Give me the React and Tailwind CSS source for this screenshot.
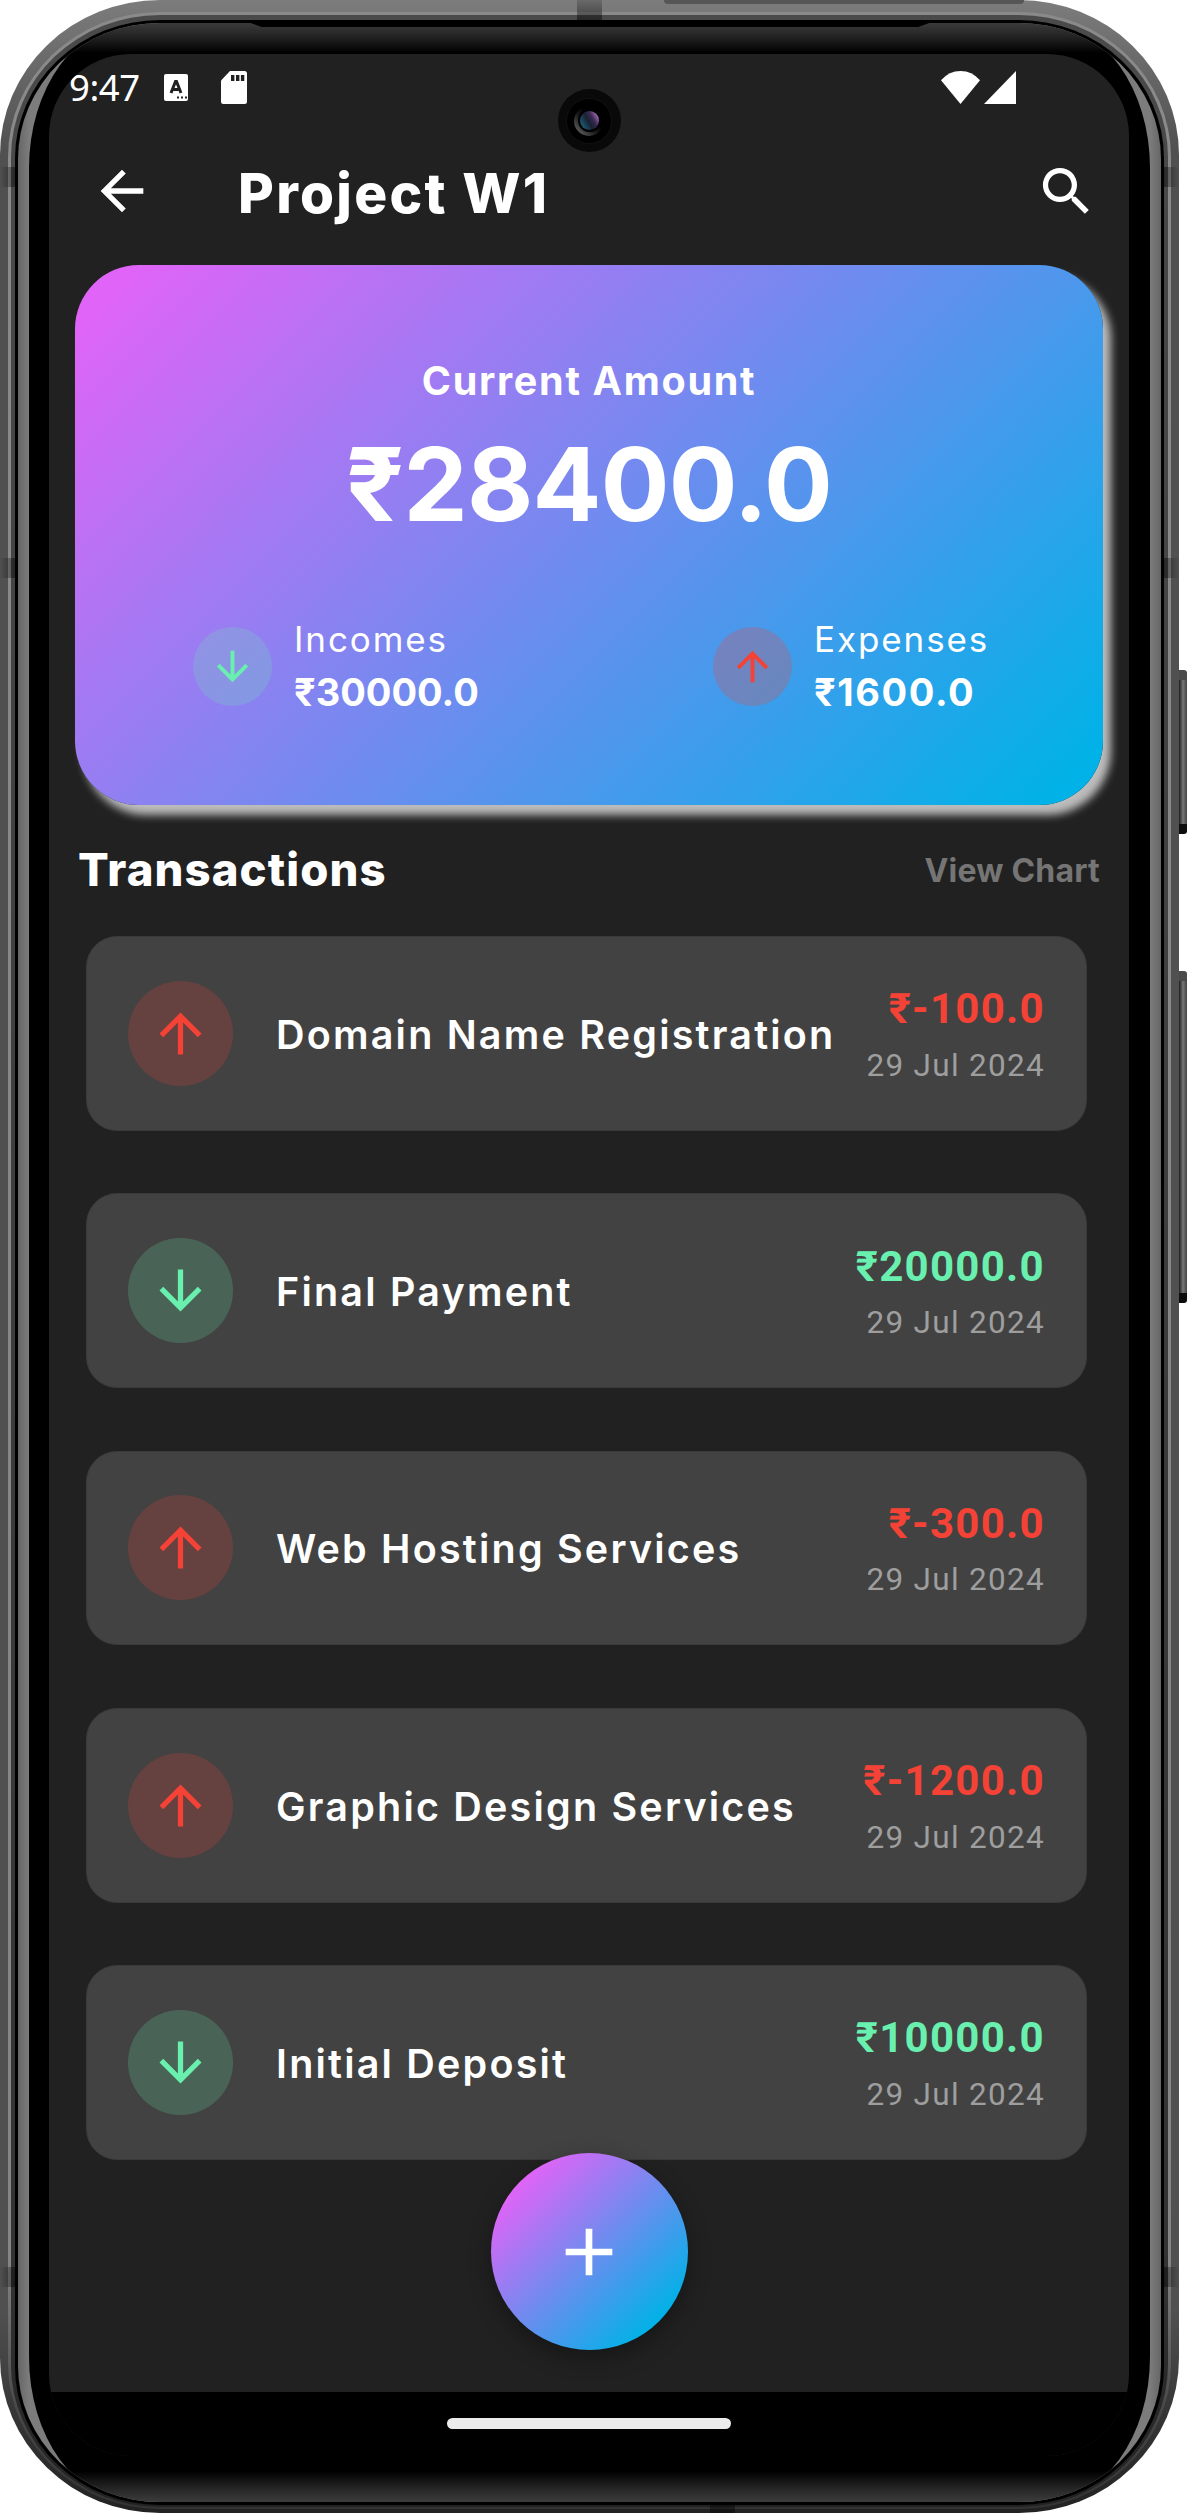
import { MdAdd, MdArrowBack, MdArrowDownward, MdArrowUpward, MdSearch } from "react-icons/md";

const transactions = [
  { title: "Domain Name Registration", amount: "₹-100.0", date: "29 Jul 2024", kind: "expense" },
  { title: "Final Payment", amount: "₹20000.0", date: "29 Jul 2024", kind: "income" },
  { title: "Web Hosting Services", amount: "₹-300.0", date: "29 Jul 2024", kind: "expense" },
  { title: "Graphic Design Services", amount: "₹-1200.0", date: "29 Jul 2024", kind: "expense" },
  { title: "Initial Deposit", amount: "₹10000.0", date: "29 Jul 2024", kind: "income" },
];

function StatusBar() {
  return (
    <div className="flex h-[66px] shrink-0 items-center pl-[20px] pr-[113px] text-white">
      <span className="w-[79px] font-['Noto_Sans',sans-serif] text-[36.5px] leading-none tracking-[-0.4px]">9:47</span>
      <svg className="ml-[16px] h-[27px] w-[24px]" viewBox="0 0 24 27">
        <rect width="24" height="27" rx="2" fill="#fff" />
        <path d="M7 19 L11.5 7.5 H12.5 L17 19 M8.5 15.5 H15.5" fill="none" stroke="#212121" strokeWidth="3" />
        <path d="M13 22.5h2v2h-2zM17 22.5h2v2h-2zM21 22.5h2v2h-2z" fill="#212121" />
      </svg>
      <svg className="ml-[33px] h-[33px] w-[26px]" viewBox="0 0 26 33">
        <path d="M9 0H23.5Q26 0 26 2.5V30.5Q26 33 23.5 33H2.5Q0 33 0 30.5V9.5Z" fill="#fff" />
        <path d="M10 4h3.4v6H10zM15 4h3.4v6H15zM19.9 4h3.4v6h-3.4z" fill="#212121" />
      </svg>
      <svg className="ml-auto h-[33px] w-[39px]" viewBox="0 0 39 33">
        <path d="M19.5 33 0 9.3Q8 0 19.5 0T39 9.3Z" fill="#fff" />
      </svg>
      <svg className="ml-[4px] h-[33px] w-[32px]" viewBox="0 0 32 33">
        <path d="M32 0V33H0Z" fill="#fff" />
      </svg>
    </div>
  );
}

function AppBar() {
  return (
    <div className="flex h-[145px] shrink-0 items-center pl-[41px] pr-[31px] text-white">
      <MdArrowBack className="-mt-[3px] size-[64px]" />
      <h1 className="ml-[84px] whitespace-nowrap text-[55px] font-extrabold leading-[66px] tracking-[2.3px]">Project W1</h1>
      <MdSearch className="-mt-[3px] ml-auto size-[63px]" />
    </div>
  );
}

function Total({ label, value, income }) {
  const Arrow = income ? MdArrowDownward : MdArrowUpward;
  return (
    <div className={income ? "flex items-center gap-[22px]" : "flex w-[272px] items-center gap-[22px]"}>
      <span
        className={
          income
            ? "-mt-[6px] flex size-[79px] shrink-0 items-center justify-center rounded-full bg-[#69f0ae]/20 text-[#69f0ae]"
            : "-mt-[6px] flex size-[79px] shrink-0 items-center justify-center rounded-full bg-[#f44336]/25 text-[#f44336]"
        }
      >
        <Arrow className="size-[47px]" />
      </span>
      <div className="whitespace-nowrap">
        <div className="text-[35px] leading-[46px] tracking-[1.9px]">{label}</div>
        <div className={income ? "text-[38px] font-bold leading-[60px]" : "text-[38px] font-bold leading-[60px] tracking-[1.6px]"}>
          {value}
        </div>
      </div>
    </div>
  );
}

function BalanceCard() {
  return (
    <section className="ml-[26px] mr-[26px] flex h-[540px] shrink-0 flex-col rounded-[64px] bg-[linear-gradient(135deg,#e064f7_3.6%,#00b2e7_96.4%)] pt-[91px] text-white shadow-[8px_10px_8px_#bdbdbd]">
      <div className="text-center text-[39.5px] font-bold leading-[50px] tracking-[1.7px]">Current Amount</div>
      <div className="mt-[18px] text-center text-[102px] font-bold leading-[120px] tracking-[-0.8px]">₹28400.0</div>
      <div className="mt-[72px] flex items-center justify-between px-[118px]">
        <Total label="Incomes" value="₹30000.0" income />
        <Total label="Expenses" value="₹1600.0" />
      </div>
    </section>
  );
}

function TransactionRow({ item }) {
  const income = item.kind === "income";
  const Arrow = income ? MdArrowDownward : MdArrowUpward;
  return (
    <li className="flex h-[194.7px] items-center rounded-[31px] border border-[#3a3a3a] bg-[#424242] pl-[41px] pr-[41px]">
      <span
        className={
          income
            ? "flex size-[105px] shrink-0 items-center justify-center rounded-full bg-[#69f0ae]/20 text-[#69f0ae]"
            : "flex size-[105px] shrink-0 items-center justify-center rounded-full bg-[#f44336]/20 text-[#f44336]"
        }
      >
        <Arrow className="size-[63px]" />
      </span>
      <span className="ml-[43px] mt-[3px] whitespace-nowrap text-[39.5px] font-semibold leading-[48px] tracking-[2.2px] text-white">
        {item.title}
      </span>
      <span className="ml-auto flex flex-col items-end whitespace-nowrap pt-[9px] font-['Roboto',sans-serif] leading-[56.5px]">
        <span
          className={
            income
              ? "text-[42px] font-bold tracking-[1.3px] text-[#69f0ae]"
              : "text-[42px] font-bold tracking-[1.3px] text-[#f44336]"
          }
        >
          {item.amount}
        </span>
        <span className="text-[31.5px] tracking-[1.3px] text-[#9e9e9e]">{item.date}</span>
      </span>
    </li>
  );
}

function Camera() {
  return (
    <div className="absolute left-[508.5px] top-[35px] flex size-[63px] items-center justify-center rounded-full bg-[#090909]">
      <div className="flex size-[46px] items-center justify-center rounded-full border border-[#111] bg-black">
        <div className="flex size-[30px] items-center justify-center rounded-full bg-[linear-gradient(45deg,#777,#1c1c1c_40%,#000_60%)]">
          <div className="flex size-[23px] items-center justify-center rounded-full bg-black">
            <div className="size-[19px] rounded-full bg-[linear-gradient(60deg,#1d6480_8%,#182233_45%,#3a2a50_65%,#c583d6_95%)]" />
          </div>
        </div>
      </div>
    </div>
  );
}

function Screen() {
  return (
    <div className="relative flex h-[2402px] w-[1080px] flex-col overflow-hidden rounded-[82px] bg-[#212121] font-['Inter',sans-serif]">
      <StatusBar />
      <Camera />
      <AppBar />
      <BalanceCard />
      <div className="flex h-[131px] shrink-0 items-center justify-between pb-[1px] pl-[29px] pr-[29px]">
        <h2 className="text-[45.5px] font-extrabold leading-none tracking-[1.1px] text-white">Transactions</h2>
        <span className="mt-[1px] text-[32px] font-bold leading-none tracking-[0.2px] text-[#757575]">View Chart</span>
      </div>
      <ul className="ml-[37px] mr-[42px] flex flex-col gap-[62.6px]">
        {transactions.map((item) => (
          <TransactionRow key={item.title} item={item} />
        ))}
      </ul>
      <div className="mt-auto flex h-[64px] shrink-0 justify-center bg-black pt-[26px]">
        <div className="h-[11px] w-[284px] rounded-full bg-[#ebebeb]" />
      </div>
      <button className="absolute bottom-[106px] left-[441.5px] flex size-[197px] items-center justify-center rounded-full bg-[linear-gradient(135deg,#e064f7_14.6%,#00b2e7_85.4%)] text-white shadow-[0_8px_22px_rgba(0,0,0,0.35)]">
        <MdAdd className="size-[80px]" />
      </button>
    </div>
  );
}

/* Antenna breaks in the metal rail */
function AntennaLines() {
  return (
    <>
      <i className="absolute left-0 top-[167px] h-[20px] w-[15px] bg-linear-to-r from-transparent to-black/45" />
      <i className="absolute left-0 top-[558px] h-[20px] w-[15px] bg-linear-to-r from-transparent to-black/45" />
      <i className="absolute left-0 top-[2267px] h-[20px] w-[15px] bg-linear-to-r from-transparent to-black/45" />
      <i className="absolute right-0 top-[167px] h-[20px] w-[15px] bg-linear-to-l from-transparent to-black/45" />
      <i className="absolute right-0 top-[558px] h-[20px] w-[15px] bg-linear-to-l from-transparent to-black/45" />
      <i className="absolute right-0 top-[2267px] h-[20px] w-[15px] bg-linear-to-l from-transparent to-black/45" />
      <i className="absolute left-[577px] top-0 h-[20px] w-[25px] bg-linear-to-b from-black/15 to-black/45" />
      <i className="absolute bottom-0 left-[710px] h-[8px] w-[25px] bg-black/40" />
      <i className="absolute left-[664px] top-0 h-[4px] w-[360px] rounded-b-[4px] bg-[#565656]" />
      <i className="absolute left-[248px] top-[22px] h-[5px] w-[684px] bg-black [clip-path:polygon(0_0,100%_0,98%_100%,2%_100%)]" />
    </>
  );
}

function PhoneFrame({ children }) {
  return (
    <div className="relative h-[2513px] w-[1179px] shrink-0 rounded-[160px/155px] bg-[linear-gradient(180deg,#7c7c7c,#505050_6%,#505050_92%,#363636_96%,#222)] px-[8px] pb-[4px] pt-[12px]">
      <div className="h-full rounded-[152px/145px] bg-[linear-gradient(180deg,#8a8a8a,#858585_90%,#484848_96%,#333)] px-[3px] pb-[2px] pt-[3px]">
        <div className="h-full rounded-[149px/142px] bg-[linear-gradient(180deg,#4a4a4a,#333_90%,#222)] px-[4px] pb-[2px] pt-[5px]">
          <div className="h-full rounded-[145px/138px] bg-black px-[3px] pb-[3px] pt-[3px]">
            <div className="h-full overflow-hidden rounded-[142px/136px] bg-[linear-gradient(90deg,#666,#7c7c7c_11px,#7c7c7c_1132px,#666)] px-[11px]">
              <div className="h-full rounded-[105px/145px] bg-[linear-gradient(180deg,#3a3a3a,#262626_12px,#000_30px,#000_2448px,#2a2a2a_2468px,#3c3c3c)] pl-[20px] pt-[31px]">
                {children}
              </div>
            </div>
          </div>
        </div>
      </div>
      <AntennaLines />
    </div>
  );
}

function SideButtons() {
  return (
    <div className="flex w-[8px] shrink-0 flex-col pt-[670px]">
      <div className="h-[164px] rounded-r-[3px] border-y-[10px] border-b-[#0d0d0d] border-t-[#4a4a4a] bg-[linear-gradient(90deg,#1c1c1c,#777_50%,#444)]" />
      <div className="mt-[137px] h-[332px] rounded-r-[3px] border-y-[10px] border-b-[#0d0d0d] border-t-[#4a4a4a] bg-[linear-gradient(90deg,#1c1c1c,#777_50%,#444)]" />
    </div>
  );
}

export default function App() {
  return (
    <div className="flex h-[2513px] w-[1187px] overflow-hidden bg-white">
      <PhoneFrame>
        <Screen />
      </PhoneFrame>
      <SideButtons />
    </div>
  );
}
